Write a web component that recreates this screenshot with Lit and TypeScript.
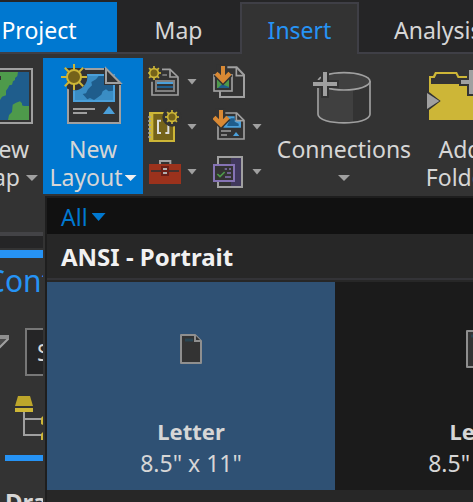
import { LitElement, html, css, svg } from "lit";
import { customElement, property } from "lit/decorators.js";

const sun = (cx: number, cy: number, r: number, ray: number, w: number) => svg`
  ${[0, 45, 90, 135, 180, 225, 270, 315].map(
    (a) => svg`<path d="M${cx} ${cy - r}V${cy - ray}" transform="rotate(${a} ${cx} ${cy})" stroke="#cdb637" stroke-width=${w}></path>`
  )}
  <circle cx=${cx} cy=${cy} r=${r} fill="#75631a" stroke="#cdb637" stroke-width=${w}></circle>`;

const importArrow = (x: number, y: number) => svg`
  <path d="M${x} ${y - 4}V${y + 44}M${x - 22} ${y + 24}L${x} ${y + 46}L${x + 22} ${y + 24}" fill="none" stroke="#333333" stroke-width="18"></path>
  <path d="M${x} ${y}V${y + 44}" stroke="#d98934" stroke-width="12"></path>
  <path d="M${x - 21} ${y + 22}L${x} ${y + 43}L${x + 21} ${y + 22}" fill="none" stroke="#d98934" stroke-width="13"></path>`;

const newMap = html`<svg class="art" viewBox="-81 39 192 186" aria-hidden="true">
  <rect x="-66" y="57" width="162" height="162" fill="#333333" stroke="#a0a0a0" stroke-width="6"></rect>
  <rect x="-54" y="66" width="141" height="144" fill="#1f5d8c"></rect>
  <path d="M-54 66H54L52 78L45 84V90L39 94L36 104L28 106L24 114L18 122V136L6 140L0 150L-54 180Z" fill="#4e9a4b"></path>
  <path d="M24 210L27 195L36 186L38 164L48 158L60 154L66 160V166L72 168H87V210Z" fill="#4e9a4b"></path>
  <path d="M-8 78h11v12h-11z" fill="#333333"></path>
</svg>`;

const newLayout = html`<svg class="art" viewBox="183 39 192 186" aria-hidden="true">
  <clipPath id="sheet"><rect x="201" y="54" width="120" height="120"></rect></clipPath>
  <path d="M204 57H318L360 98V219H204Z" fill="#333333" stroke="#a0a0a0" stroke-width="6"></path>
  <rect x="219" y="72" width="126" height="84" fill="#4ba0da"></rect>
  <rect x="225" y="78" width="114" height="72" fill="#3a8dc4"></rect>
  <path d="M248 132L258 130L264 118L276 106L274 96L288 88L296 78H318V92L339 104V122L326 124L318 118L308 124L304 134L294 142L282 150L270 144L262 148Z" fill="#1f5d8c"></path>
  <path d="M312 54H319L363 97V105H312Z" fill="#333333"></path>
  <path d="M318 56V99H361Z" fill="#333333" stroke="#a0a0a0" stroke-width="6"></path>
  <path d="M219 177H285M219 189H261" stroke="#a0a0a0" stroke-width="6"></path>
  <path d="M327 168L345 192H309Z" fill="#4ba0da"></path>
  <circle cx="222" cy="81" r="40" fill="#333333" clip-path="url(#sheet)"></circle>
  ${sun(222, 81, 21, 39, 6)}
</svg>`;

const connections = html`<svg class="art" viewBox="126 24 192 186" aria-hidden="true">
  <path d="M145 78V180C152 198 190 204 222 204H249V106L145 84Z" fill="#404040"></path>
  <path d="M144 78V178C144 212 300 212 300 178V78" fill="none" stroke="#a0a0a0" stroke-width="5"></path>
  <ellipse cx="222" cy="79" rx="78" ry="26" fill="#404040" stroke="#a0a0a0" stroke-width="5"></ellipse>
  <path d="M159 51h12v30h30v12h-30v30h-12v-30h-30v-12h30z" fill="#a0a0a0" stroke="#333333" stroke-width="12" paint-order="stroke"></path>
</svg>`;

const addFolder = html`<svg class="art wide" viewBox="462 24 216 186" aria-hidden="true">
  <path d="M477 195V63H489L495 51H561L567 63H650V195Z" fill="#cdb637"></path>
  <path d="M483 87V69H494L500 57H557L563 69H644V87Z" fill="#333333"></path>
  <path d="M468 108L478 112L512 138L478 164L468 170Z" fill="#333333"></path>
  <path d="M471 114L508 138L471 162Z" fill="#a0a0a0"></path>
  <path d="M597 45h12v30h24v12h-24v30h-12v-30h-24v-12h24z" fill="#a0a0a0" stroke="#333333" stroke-width="12" paint-order="stroke"></path>
</svg>`;

const newReport = html`<svg viewBox="24 24 102 111" aria-hidden="true">
  <path d="M66 43H90L114 66V120H36V80" fill="none" stroke="#a0a0a0" stroke-width="5"></path>
  <path d="M90 43V66H114" fill="none" stroke="#a0a0a0" stroke-width="5"></path>
  <path d="M67 60H81" stroke="#808080" stroke-width="5"></path>
  <rect x="48" y="78" width="54" height="30" fill="#333333" stroke="#808080" stroke-width="6"></rect>
  <path d="M51 84H99" stroke="#4ba0da" stroke-width="6"></path>
  <path d="M51 96H99" stroke="#1f5d8c" stroke-width="6"></path>
  ${sun(42, 54, 13, 21, 5)}
</svg>`;

const newNotebook = html`<svg viewBox="24 159 102 111" aria-hidden="true">
  <rect x="30" y="174" width="72" height="84" fill="#75631a" stroke="#cdb637" stroke-width="6"></rect>
  <path d="M36 172V260" stroke="#cdb637" stroke-width="8"></path>
  <path d="M24 186h9M24 198h9M24 210h9M24 222h9M24 234h9M24 246h9" stroke="#a0a0a0" stroke-width="5"></path>
  <path d="M63 197H54V234H63M76 234H85V197H76" fill="none" stroke="#dcdcdc" stroke-width="6"></path>
  <circle cx="96" cy="186" r="29" fill="#333333"></circle>
  ${sun(96, 186, 13, 21, 5)}
</svg>`;

const toolbox = html`<svg viewBox="24 294 102 111" aria-hidden="true">
  <path d="M60 327V318H91V327" fill="none" stroke="#a0a0a0" stroke-width="6"></path>
  <rect x="27" y="327" width="96" height="60" fill="#9b321c"></rect>
  <path d="M33 348H117" stroke="#333333" stroke-width="5"></path>
  <rect x="63" y="333" width="24" height="30" fill="#6a1f17"></rect>
  <path d="M69 342H81M69 354H81" stroke="#b0b0b0" stroke-width="6"></path>
</svg>`;

const importMap = html`<svg viewBox="219 24 102 111" aria-hidden="true">
  <path d="M240 37H290L312 60V126H240Z" fill="#333333" stroke="#a0a0a0" stroke-width="6"></path>
  <path d="M289 37V62H312" fill="none" stroke="#a0a0a0" stroke-width="5"></path>
  <rect x="222" y="60" width="54" height="48" fill="#333333" stroke="#a0a0a0" stroke-width="5"></rect>
  <path d="M231 72H267V99H231Z" fill="#4e9a4b"></path>
  <path d="M234 99L246 88L267 96V99Z" fill="#1f5d8c"></path>
  <path d="M230 28H262V56H230Z" fill="#333333"></path>
  ${importArrow(249, 33)}
</svg>`;

const importLayout = html`<svg viewBox="219 159 102 111" aria-hidden="true">
  <path d="M234 174H290L312 196V252H234Z" fill="#333333" stroke="#a0a0a0" stroke-width="5"></path>
  <path d="M256 184H284V196H303V218H250Z" fill="#4ba0da"></path>
  <path d="M262 210L272 190H284V200L296 206V213H262Z" fill="#1f5d8c"></path>
  <path d="M289 174V197H312" fill="none" stroke="#a0a0a0" stroke-width="5"></path>
  <path d="M243 228H273M243 240H261" stroke="#a0a0a0" stroke-width="5"></path>
  <path d="M288 231L298 243H279Z" fill="#4ba0da"></path>
  <path d="M226 160H256V190H226Z" fill="#333333"></path>
  ${importArrow(243, 165)}
</svg>`;

const task = html`<svg viewBox="219 294 102 111" aria-hidden="true">
  <rect x="234" y="306" width="72" height="90" fill="#333333" stroke="#a0a0a0" stroke-width="6"></rect>
  <rect x="273" y="309" width="30" height="84" fill="#40385c"></rect>
  <rect x="222" y="330" width="60" height="48" fill="#333333" stroke="#8573b4" stroke-width="6"></rect>
  <path d="M254 342H261M267 342H273M261 354H273M255 366H273" stroke="#8573b4" stroke-width="5"></path>
  <path d="M232 357L240 365L254 351" fill="none" stroke="#4e9a4b" stroke-width="5"></path>
</svg>`;

const pageIcon = (w: number, h: number) => html`<svg width=${w} height=${h} viewBox="0 0 ${w} ${h}" aria-hidden="true">
  <path d="M1 1H${w - 7}L${w - 1} 7V${h - 1}H1Z" fill="#333333" stroke="#8f8f8f" stroke-width="2" stroke-linejoin="round"></path>
  <path d="M5 6H${w - 9}" stroke="#2a4552" stroke-width="3"></path>
  <path d="M${w - 7} 1V7H${w - 1}" fill="#333333" stroke="#8f8f8f" stroke-width="2"></path>
</svg>`;

const filterIcon = html`<svg class="filter" viewBox="0 0 34 36" aria-hidden="true">
  <path d="M2 2H33V5L21 17V34L14 28V17L2 5Z" fill="#4a4a4a" stroke="#a0a0a0" stroke-width="2"></path>
  <path d="M1 3H34" stroke="#8f8f8f" stroke-width="4"></path>
</svg>`;

const drawingOrder = html`<svg class="order" viewBox="0 0 40 44" aria-hidden="true">
  <path d="M3 0H15L18 10H0Z" fill="#bda62b"></path>
  <rect y="12" width="18" height="4" fill="#cdb637"></rect>
  <path d="M9 16V39H27M9 23H27" fill="none" stroke="#a0a0a0" stroke-width="2"></path>
  <path d="M26 22L30 18L36 24L30 30L26 28ZM26 38L30 34L36 40L30 44H26Z" fill="#cdb637"></path>
</svg>`;

@customElement("drop-arrow")
export class DropArrow extends LitElement {
  static styles = css`
    :host { display: inline-block; width: 12px; height: 6px; vertical-align: 5px; background: currentColor; clip-path: polygon(0 0, 100% 0, 50% 100%); }
  `;
  render() { return html``; }
}

@customElement("layout-card")
export class LayoutCard extends LitElement {
  @property() name = "";
  @property() size = "";
  @property({ type: Number }) iconWidth = 22;
  @property({ type: Number }) iconHeight = 30;
  @property({ type: Boolean }) selected = false;

  static styles = css`
    :host { flex: none; width: 288px; }
    .card {
      display: flex; flex-direction: column; align-items: center; width: 100%; min-height: 208px;
      margin: 0; padding: 0 0 11px; border: 0; background: #1b1b1b; color: #d6d6d6;
      font: 23px/32px "Noto Sans", sans-serif;
    }
    .selected { background: #2f5174; }
    .preview { flex: 1; display: flex; align-items: center; }
    .name { font-weight: 700; font-size: 22px; }
  `;

  render() {
    return html`<button class="card ${this.selected ? "selected" : ""}">
      <span class="preview">${pageIcon(this.iconWidth, this.iconHeight)}</span>
      <span class="name">${this.name}</span>
      <span>${this.size}</span>
    </button>`;
  }
}

@customElement("app-root")
export class AppRoot extends LitElement {
  static styles = css`
    :host {
      display: block; height: 100vh; overflow: hidden; position: relative;
      background: #333333; color: #d6d6d6; font: 23px/28px "Noto Sans", sans-serif;
    }
    * { box-sizing: border-box; }
    button { margin: 0; padding: 0; border: 0; background: none; color: inherit; font: inherit; white-space: nowrap; }

    .tabs { display: flex; height: 54px; padding-top: 2px; margin-left: -39px; background: #252526; box-shadow: inset 0 -2px #3f3f46; }
    .tab { flex: none; padding: 6px 0 0; height: 50px; }
    .project { width: 156px; background: #0078d0; color: #ffffff; }
    .map { width: 123px; }
    .insert { width: 119px; height: 52px; padding: 2px 0 0; background: #333333; border: 2px solid #3f3f46; border-bottom: 0; color: #2693f5; }
    .analysis { padding-left: 35px; }

    .ribbon { display: flex; padding: 4px 0 38px; margin-left: -33px; border-bottom: 4px solid #434346; }
    .big { flex: none; display: flex; flex-direction: column; align-items: center; height: 136px; padding-top: 5px; }
    .big.active { background: #0078d0; }
    .art { width: 64px; height: 62px; margin-bottom: 10px; flex: none; }
    .art.wide { width: 72px; }
    .w76 { width: 76px; }
    .w100 { width: 100px; }
    .w140 { width: 140px; }
    .w92 { width: 92px; }
    .big drop-arrow { color: #a0a0a0; }
    .big.active drop-arrow { color: #f0f0f0; margin-left: 2px; }
    .tools { flex: none; display: grid; grid-template-columns: 65px 61px; grid-template-rows: repeat(3, 45px); padding: 1px 0 0 5px; }
    .tool { display: flex; align-items: center; gap: 5px; color: #a0a0a0; }
    .tool svg { width: 34px; height: 37px; flex: none; }
    .tool drop-arrow { width: 10px; flex: none; }

    .pane { margin-top: 12px; box-shadow: 0 -12px #252526; padding-top: 2px; }
    .bar { height: 8px; background: #2693f5; }
    .title { margin: 0 0 0 -14px; padding: 3px 0 0; font-size: 30px; line-height: 40px; font-weight: 400; color: #2693f5; }
    .search { display: flex; align-items: center; margin: 27px 0 20px -25px; gap: 16px; }
    .filter { width: 34px; height: 36px; flex: none; }
    .field { flex: 1; height: 48px; min-width: 0; padding: 0 10px; border: 2px solid #777777; border-radius: 0; background: #252526; font: inherit; color: inherit; }
    .field::placeholder { color: #d6d6d6; opacity: 1; }
    .order { display: block; width: 40px; height: 44px; margin-left: 15px; }
    .underline { width: 56px; height: 6px; margin: 15px 0 0 5px; background: #2693f5; }
    .section { margin: 25px 0 0 5px; font-size: 24px; line-height: 32px; }

    .gallery {
      position: absolute; top: 196px; left: 45px; right: 0; padding-bottom: 20px;
      border: solid #1e1e1e; border-width: 2px 0 0 2px; background: #272727; box-shadow: 0 0 0 2px #333333;
    }
    .all { display: flex; align-items: center; gap: 4px; width: 100%; height: 36px; padding: 2px 14px 0; background: #111111; color: #0078d0; }
    .all drop-arrow { width: 14px; height: 8px; }
    .group { margin: 0; height: 48px; padding: 7px 14px 0; border-bottom: 2px solid #272727; box-shadow: inset 0 -2px #333337; font-size: 24px; line-height: 32px; color: #f1f1f1; }
    .cards { display: flex; overflow: hidden; background: #1b1b1b; }
  `;

  render() {
    return html`
      <nav class="tabs">
        <button class="tab project">Project</button>
        <button class="tab map">Map</button>
        <button class="tab insert">Insert</button>
        <button class="tab analysis">Analysis</button>
      </nav>
      <div class="ribbon">
        <button class="big w76">${newMap}<span>New</span><span>Map <drop-arrow></drop-arrow></span></button>
        <button class="big w100 active">${newLayout}<span>New</span><span>Layout<drop-arrow></drop-arrow></span></button>
        <div class="tools">
          <button class="tool" aria-label="New Report">${newReport}<drop-arrow></drop-arrow></button>
          <button class="tool" aria-label="Import Map">${importMap}</button>
          <button class="tool" aria-label="New Notebook">${newNotebook}<drop-arrow></drop-arrow></button>
          <button class="tool" aria-label="Import Layout">${importLayout}<drop-arrow></drop-arrow></button>
          <button class="tool" aria-label="Toolbox">${toolbox}<drop-arrow></drop-arrow></button>
          <button class="tool" aria-label="Task">${task}<drop-arrow></drop-arrow></button>
        </div>
        <button class="big w140">${connections}<span>Connections</span><span><drop-arrow></drop-arrow></span></button>
        <button class="big w92">${addFolder}<span>Add</span><span>Folder</span></button>
      </div>
      <section class="pane">
        <div class="bar"></div>
        <h2 class="title">Contents</h2>
        <div class="search">${filterIcon}<input class="field" type="text" placeholder="Search" aria-label="Search" /></div>
        ${drawingOrder}
        <div class="underline"></div>
        <h3 class="section">Drawing Order</h3>
      </section>
      <div class="gallery">
        <button class="all">All<drop-arrow></drop-arrow></button>
        <h3 class="group">ANSI - Portrait</h3>
        <div class="cards">
          <layout-card name="Letter" size='8.5" x 11"' selected></layout-card>
          <layout-card name="Legal" size='8.5" x 14"' .iconWidth=${26} .iconHeight=${38}></layout-card>
        </div>
      </div>
    `;
  }
}
